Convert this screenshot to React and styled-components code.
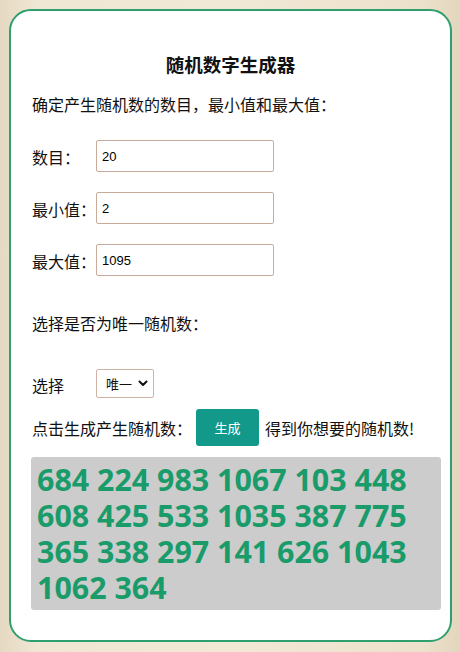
import React from "react";
import styled, { createGlobalStyle } from "styled-components";

const Global = createGlobalStyle`
  html, body { margin: 0; padding: 0; }
  body {
    width: 460px;
    height: 652px;
    overflow: hidden;
    background: linear-gradient(90deg, #e6d9c2 0%, #efe6d4 8%, #f1e8d6 50%, #ece1cb 92%, #e4d6be 100%);
    font-family: "Noto Sans CJK SC", "Noto Sans", sans-serif;
    color: #111;
  }
`;

const Card = styled.div`
  box-sizing: border-box;
  margin: 9px;
  width: 443px;
  height: 633px;
  background: #fff;
  border: 2px solid #2e9f6d;
  border-radius: 22px;
  padding: 41px 10px 0 21px;
  display: flex;
  flex-direction: column;
`;

const Title = styled.h1`
  margin: 0 0 16px;
  font-size: 18.5px;
  line-height: 24px;
  font-weight: 700;
  text-align: center;
  padding-right: 0;
  margin-left: -11px;
`;

const Para = styled.p`
  margin: 0 0 ${(p) => p.$mb || 0}px;
  font-size: 16px;
  line-height: 24px;
`;

const FieldRow = styled.div`
  display: flex;
  align-items: center;
  height: 32px;
  margin-bottom: ${(p) => p.$mb || 0}px;
`;

const Label = styled.span`
  width: 64px;
  font-size: 16px;
  line-height: 24px;
  padding-top: 2px;
`;

const Input = styled.input`
  box-sizing: border-box;
  width: 178px;
  height: 32px;
  border: 1px solid #c9ab9c;
  border-radius: 2px;
  padding: 0 5px;
  font-family: "Liberation Sans", Arial, sans-serif;
  font-size: 13px;
  color: #000;
  outline: none;
`;

const SelectBox = styled.div`
  box-sizing: border-box;
  width: 58px;
  height: 29px;
  border: 1px solid #cfb3a5;
  border-radius: 2px;
  display: flex;
  align-items: center;
  justify-content: space-between;
  padding: 0 5px 0 9px;
  font-size: 13px;
`;

const SelectRow = styled.div`
  display: flex;
  align-items: center;
  height: 29px;
  margin-bottom: 11px;
`;

const ActionRow = styled.div`
  display: flex;
  align-items: center;
  height: 37px;
  margin-bottom: 11px;
  font-size: 16px;
`;

const Button = styled.button`
  width: 63px;
  height: 37px;
  margin: 0 6px 0 4px;
  border: none;
  border-radius: 3px;
  background: #12998a;
  color: #fff;
  font-family: "Noto Sans CJK SC", sans-serif;
  font-size: 13px;
`;

const Result = styled.div`
  box-sizing: border-box;
  width: 410px;
  margin-left: -1px;
  height: 153px;
  background: #cccccc;
  border-radius: 3px;
  padding: 5px 6px 4px 6px;
  font-family: "Open Sans", "Noto Sans", sans-serif;
  font-weight: 700;
  font-size: 30.4px;
  line-height: 36px;
  color: #1a9b6a;
`;

const Chevron = () => (
  <svg width="10" height="7" viewBox="0 0 10 7">
    <path d="M1.5 1.5 L5 5 L8.5 1.5" fill="none" stroke="#111" strokeWidth="2" strokeLinecap="round" strokeLinejoin="round" />
  </svg>
);

export default function App() {
  const nums = [684, 224, 983, 1067, 103, 448, 608, 425, 533, 1035, 387, 775, 365, 338, 297, 141, 626, 1043, 1062, 364];
  return (
    <>
      <Global />
      <Card>
        <Title>随机数字生成器</Title>
        <Para $mb={24}>确定产生随机数的数目，最小值和最大值：</Para>
        <FieldRow $mb={20}>
          <Label>数目：</Label>
          <Input defaultValue="20" />
        </FieldRow>
        <FieldRow $mb={20}>
          <Label>最小值：</Label>
          <Input defaultValue="2" />
        </FieldRow>
        <FieldRow $mb={35}>
          <Label>最大值：</Label>
          <Input defaultValue="1095" />
        </FieldRow>
        <Para $mb={34}>选择是否为唯一随机数：</Para>
        <SelectRow>
          <Label>选择</Label>
          <SelectBox>
            <span>唯一</span>
            <Chevron />
          </SelectBox>
        </SelectRow>
        <ActionRow>
          <span>点击生成产生随机数：</span>
          <Button>生成</Button>
          <span>得到你想要的随机数!</span>
        </ActionRow>
        <Result>{nums.join(" ")}</Result>
      </Card>
    </>
  );
}
